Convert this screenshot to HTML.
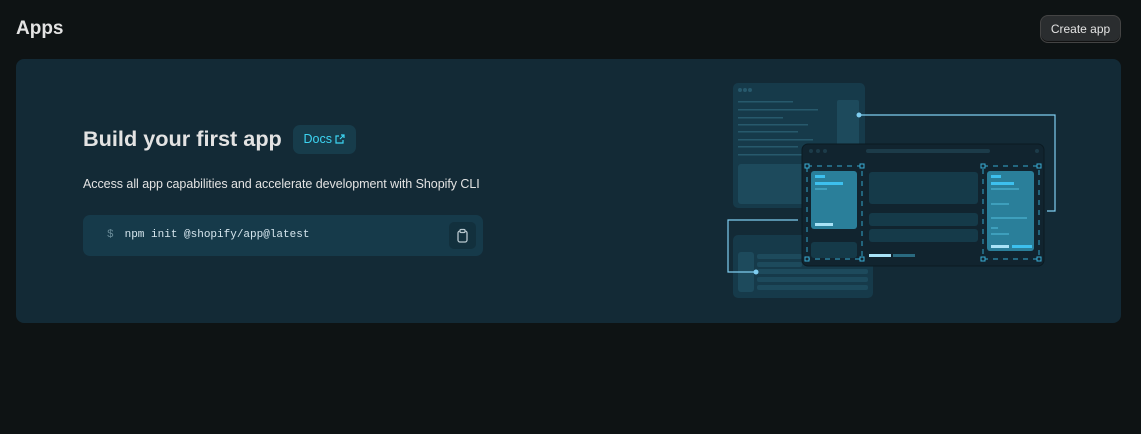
<html><head><style>
body{margin:0;width:1141px;height:434px;background:#0e1314;font-family:"Liberation Sans",sans-serif;overflow:hidden;position:relative}
h1{position:absolute;left:16px;top:18px;margin:0;font-size:19px;font-weight:700;color:#e3e3e3}
.btn{position:absolute;left:1040px;top:15px;width:81px;height:28px;border-radius:8px;background:#2a2d2f;border:1px solid #444;box-sizing:border-box;color:#e3e3e3;font-size:12px;text-align:center;line-height:27px;box-shadow:inset 0 -1px 0 #111}
.card{position:absolute;left:16px;top:59px;width:1105px;height:264px;border-radius:8px;background:#132a36}
.t{position:absolute;left:83px;top:126px;font-size:21.7px;font-weight:700;color:#e3e3e3}
.docs{position:absolute;left:293px;top:125px;width:63px;height:29px;border-radius:7px;background:#173c4b;color:#3dd5f3;font-size:12.5px;line-height:29px;text-align:center}
.p{position:absolute;left:83px;top:177px;font-size:12.5px;color:#e3e3e3;letter-spacing:-0.05px}
.cmd{position:absolute;left:83px;top:215px;width:400px;height:41px;border-radius:7px;background:#163a4a;font-family:"Liberation Mono",monospace;font-size:11px;color:#d6e6ee;line-height:41px}
.cmd b{font-weight:400;color:#6a8c99;margin-left:24px;margin-right:11px}
.cp{position:absolute;right:7px;top:7px;width:27px;height:27px;border-radius:5px;background:#12303d}
</style></head><body>
<h1>Apps</h1>
<div class="btn">Create app</div>
<div class="card"></div>
<div class="t">Build your first app</div>
<div class="docs">Docs <svg width="10" height="10" viewBox="0 0 10 10" style="vertical-align:-1px"><path d="M6 1h3v3M9 1L5 5M4 2H1v7h7V6" fill="none" stroke="#3dd5f3" stroke-width="1.2"/></svg></div>
<div class="p">Access all app capabilities and accelerate development with Shopify CLI</div>
<div class="cmd"><b>$</b>npm init @shopify/app@latest<div class="cp"><svg width="27" height="27"><rect x="9" y="9" width="9" height="11" rx="2" fill="none" stroke="#b9c8cf" stroke-width="1.3"/><rect x="11" y="7.5" width="5" height="3" rx="1" fill="#12303d" stroke="#b9c8cf" stroke-width="1.2"/></svg></div></div>
<svg style="position:absolute;left:0;top:0" width="1141" height="434">
<rect x="733" y="83" width="132" height="125" rx="5" fill="#163a4a"/>
<g fill="#27596c"><circle cx="740" cy="90" r="2"/><circle cx="745" cy="90" r="2"/><circle cx="750" cy="90" r="2"/>
<rect x="738" y="101" width="55" height="1.5"/><rect x="738" y="109" width="80" height="1.5"/><rect x="738" y="117" width="45" height="1.5"/><rect x="738" y="124" width="70" height="1.5"/><rect x="738" y="131" width="60" height="1.5"/><rect x="738" y="139" width="75" height="1.5"/><rect x="738" y="146" width="60" height="1.5"/><rect x="738" y="154" width="65" height="1.5"/></g>
<rect x="837" y="100" width="22" height="70" rx="2" fill="#1d4a5c"/>
<rect x="738" y="164" width="70" height="40" rx="3" fill="#1d4a5c"/>
<rect x="733" y="235" width="140" height="63" rx="5" fill="#163a4a"/>
<rect x="738" y="252" width="16" height="40" rx="3" fill="#1d4a5c"/>
<g fill="#1d4a5c"><rect x="757" y="254" width="45" height="5" rx="2"/><rect x="757" y="262" width="45" height="5" rx="2"/><rect x="757" y="269" width="111" height="5" rx="2"/><rect x="757" y="277" width="111" height="5" rx="2"/><rect x="757" y="285" width="111" height="5" rx="2"/></g>
<g fill="none" stroke="#7fcdf0" stroke-width="1.2"><path d="M859 115H1055V211H1047"/><path d="M756 272H728V220H798"/></g>
<circle cx="859" cy="115" r="2.5" fill="#7fcdf0"/><circle cx="756" cy="272" r="2.5" fill="#7fcdf0"/>
<rect x="802" y="144" width="242" height="122" rx="6" fill="#11242f" stroke="#0b1a22" stroke-width="1"/>
<g fill="#1c3b49"><circle cx="811" cy="151" r="2"/><circle cx="818" cy="151" r="2"/><circle cx="825" cy="151" r="2"/><rect x="866" y="149" width="124" height="4" rx="2"/><circle cx="1037" cy="151" r="2"/></g>
<rect x="811" y="171" width="46" height="58" rx="3" fill="#2a7f9a"/>
<rect x="987" y="171" width="47" height="80" rx="3" fill="#2a7f9a"/>
<g fill="#153a49"><rect x="869" y="172" width="109" height="32" rx="3"/><rect x="869" y="213" width="109" height="13" rx="3"/><rect x="869" y="229" width="109" height="13" rx="3"/><rect x="811" y="242" width="46" height="16" rx="3"/></g>
<g fill="#3dc0ee"><rect x="815" y="175" width="10" height="3"/><rect x="815" y="182" width="28" height="3"/><rect x="991" y="175" width="10" height="3"/><rect x="991" y="182" width="23" height="3"/><rect x="1012" y="245" width="20" height="3"/></g>
<g fill="#3e9fbc"><rect x="815" y="188" width="12" height="2"/><rect x="991" y="188" width="28" height="2"/><rect x="991" y="203" width="18" height="2"/><rect x="991" y="217" width="36" height="2"/><rect x="991" y="227" width="7" height="2"/><rect x="991" y="233" width="18" height="2"/></g>
<g fill="#a9e3f7"><rect x="815" y="223" width="18" height="3"/><rect x="991" y="245" width="18" height="3"/><rect x="869" y="254" width="22" height="3"/></g>
<rect x="893" y="254" width="22" height="3" fill="#2a6a80"/>
<g fill="none" stroke="#2f8fb0" stroke-width="1.2" stroke-dasharray="5 5"><rect x="807" y="166" width="55" height="93"/><rect x="983" y="166" width="56" height="93"/></g>
<g fill="#11242f" stroke="#3aaed6" stroke-width="1"><rect x="805" y="164" width="4" height="4"/><rect x="860" y="164" width="4" height="4"/><rect x="805" y="257" width="4" height="4"/><rect x="860" y="257" width="4" height="4"/><rect x="981" y="164" width="4" height="4"/><rect x="1037" y="164" width="4" height="4"/><rect x="981" y="257" width="4" height="4"/><rect x="1037" y="257" width="4" height="4"/></g>
</svg>
</body></html>
